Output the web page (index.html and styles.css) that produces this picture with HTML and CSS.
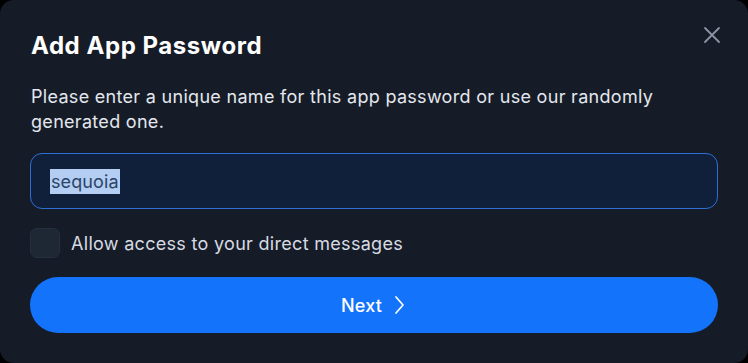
FILE: index.html
```html
<!DOCTYPE html>
<html lang="en">
<head>
<meta charset="utf-8">
<title>Add App Password</title>
<link rel="stylesheet" href="styles.css">
</head>
<body>
<div class="dialog">
  <header class="dialog-header">
    <h1 class="title">Add App Password</h1>
    <button class="close" aria-label="Close">
      <svg width="18" height="18" viewBox="0 0 18 18"><path d="M2 2 L16 16 M16 2 L2 16" stroke="currentColor" stroke-width="1.8" stroke-linecap="round"/></svg>
    </button>
  </header>
  <p class="desc">Please enter a unique name for this app password or use our randomly generated one.</p>
  <div class="field"><span class="selected">sequoia</span></div>
  <label class="check-row">
    <span class="checkbox"></span>
    <span class="check-label">Allow access to your direct messages</span>
  </label>
  <button class="next">
    <span>Next</span>
    <svg width="12" height="20" viewBox="0 0 12 20"><path d="M3 2 L10 10 L3 18" fill="none" stroke="currentColor" stroke-width="1.7" stroke-linecap="round" stroke-linejoin="round"/></svg>
  </button>
</div>
</body>
</html>
```
FILE: styles.css
```css
* { box-sizing: border-box; }
html, body {
  margin: 0;
  padding: 0;
  background: #000;
  width: 748px;
  height: 363px;
  overflow: hidden;
}
body {
  font-family: Inter, "Noto Sans", sans-serif;
}
.dialog {
  width: 748px;
  height: 363px;
  background: #161c27;
  border-radius: 14px;
  padding: 30px 30px 0 30px;
  display: flex;
  flex-direction: column;
}
.dialog-header {
  display: flex;
  justify-content: space-between;
  align-items: flex-start;
}
.title {
  margin: 0;
  padding-left: 1px;
  font-size: 24px;
  line-height: 32px;
  font-weight: 700;
  color: #ffffff;
  letter-spacing: 0.55px;
}
.close {
  background: none;
  border: 0;
  padding: 0;
  margin: -4px -3px 0 0;
  color: #8a93a3;
  width: 18px;
  height: 18px;
  display: flex;
}
.desc {
  margin: 22px 0 0 1px;
  font-size: 18px;
  line-height: 25px;
  color: #e3e7ee;
  letter-spacing: 0.3px;
}
.field {
  margin-top: 19px;
  height: 56px;
  border: 1px solid #2e6fd6;
  background: #10203a;
  border-radius: 12px;
  padding: 0 19px;
  display: flex;
  align-items: center;
  font-size: 18px;
}
.selected {
  background: #b3cdf3;
  color: #2b4466;
  line-height: 25px;
  padding: 0 1px;
  letter-spacing: 0.1px;
}
.check-row {
  margin-top: 19px;
  display: flex;
  align-items: center;
  gap: 11px;
}
.checkbox {
  width: 30px;
  height: 30px;
  border-radius: 7px;
  background: #1e2734;
  border: 1px solid #262f3d;
}
.check-label {
  font-size: 18px;
  color: #d6dbe3;
  letter-spacing: 0.3px;
}
.next {
  margin-top: 19px;
  height: 56px;
  border: 0;
  border-radius: 28px;
  background: #1473fb;
  color: #fff;
  font-family: inherit;
  font-size: 18px;
  font-weight: 500;
  letter-spacing: 0.2px;
  display: flex;
  align-items: center;
  justify-content: center;
  gap: 11px;
  padding-left: 4px;
}
.next svg { display: block; }
```
